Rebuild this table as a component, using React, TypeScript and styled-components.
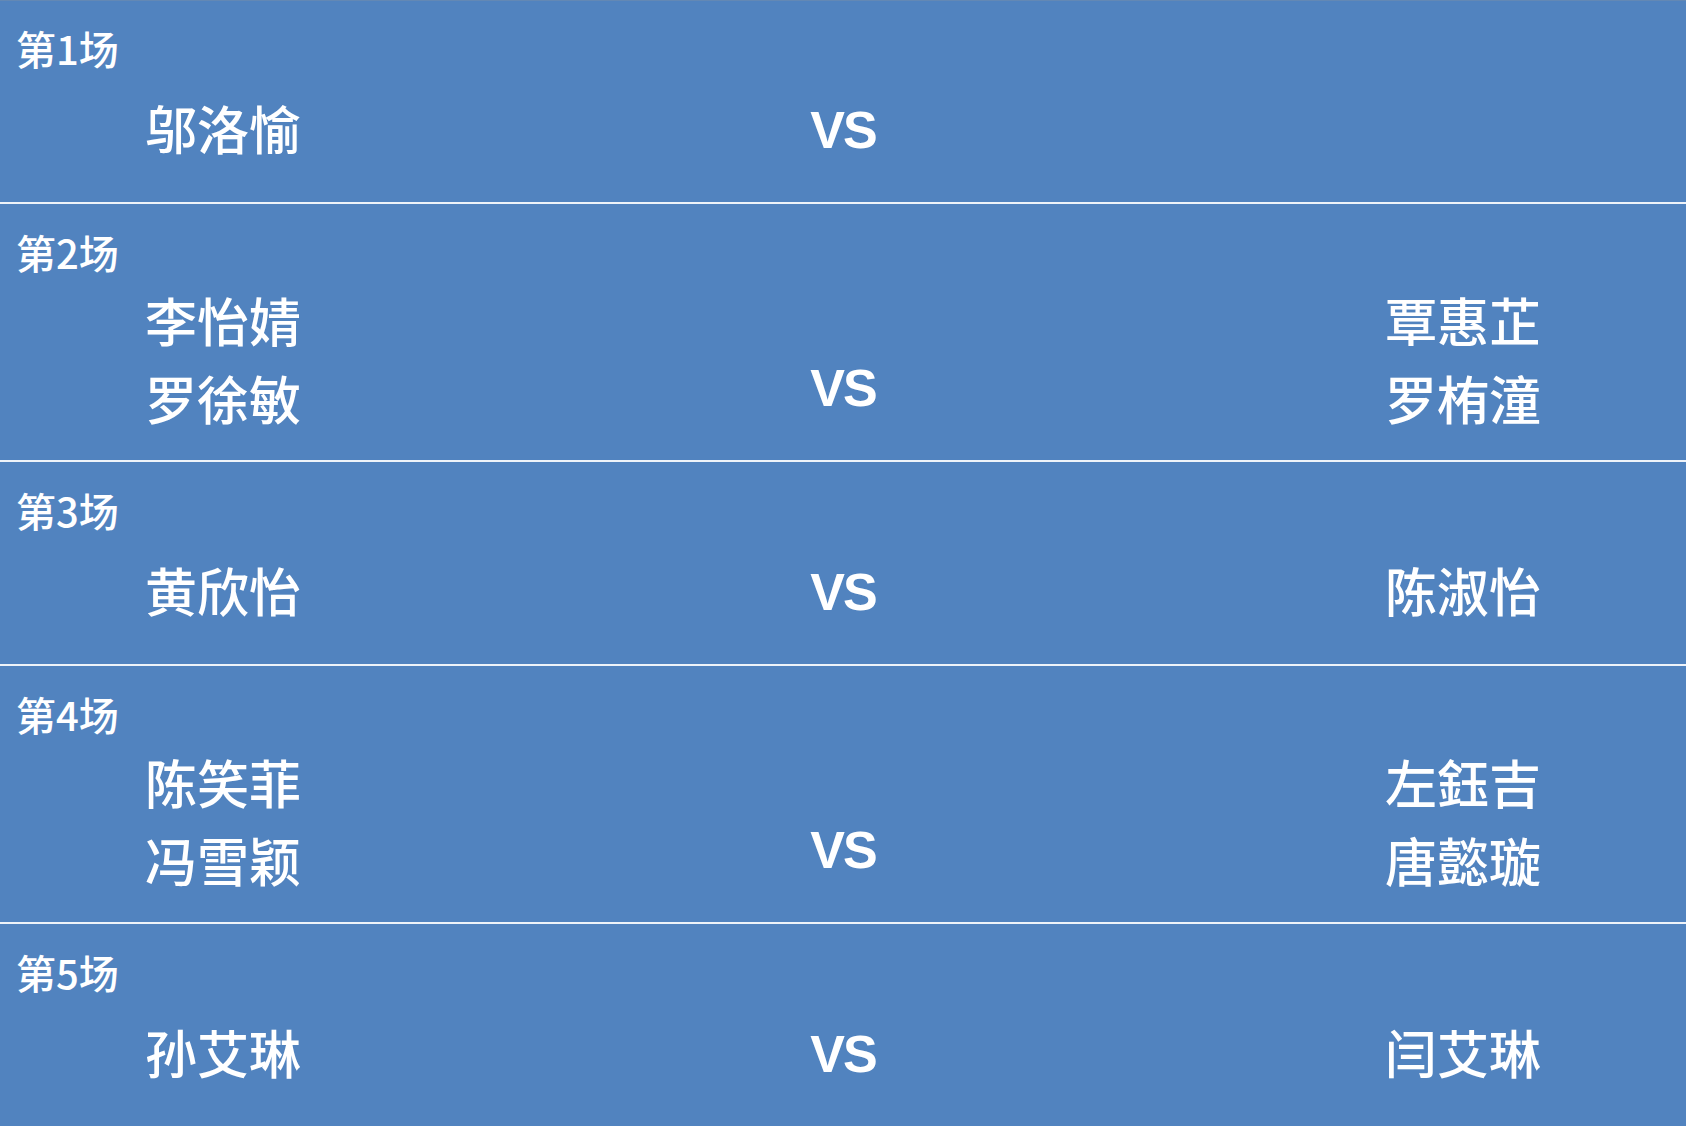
import React from "react";
import styled, { createGlobalStyle } from "styled-components";

const GlobalStyle = createGlobalStyle`
  html, body {
    margin: 0;
    padding: 0;
    background: #5183bf;
  }
  body {
    font-family: "Noto Sans CJK SC", "Noto Sans", sans-serif;
    color: #ffffff;
  }
`;

const List = styled.div`
  display: flex;
  flex-direction: column;
  box-shadow: inset 0 1px 0 #6388b4;
`;

const MatchRow = styled.section`
  display: flex;
  flex-direction: column;
  padding: 25px 0 24px 0;
  border-bottom: 2px solid #eef3f9;
`;

const Title = styled.div`
  padding-left: 16px;
  font-size: 40px;
  font-weight: 500;
  line-height: 46px;
  margin-bottom: 6px;
`;

const Matchup = styled.div`
  display: grid;
  grid-template-columns: 1fr auto 1fr;
  align-items: center;
  padding: 0 145px;
`;

const Team = styled.div<{ $side: "left" | "right" }>`
  display: flex;
  flex-direction: column;
  justify-self: ${(p) => (p.$side === "left" ? "start" : "end")};
`;

const Player = styled.div`
  font-size: 52px;
  font-weight: 500;
  line-height: 77.5px;
  white-space: nowrap;
`;

const Versus = styled.div`
  align-self: end;
  font-family: "Liberation Sans", Arial, sans-serif;
  font-weight: bold;
  font-size: 52px;
  letter-spacing: -2px;
  line-height: 95px;
  padding-top: 6px;
`;

type Match = { left: string[]; right: string[] };

const matches: Match[] = [
  { left: ["邬洛愉"], right: [] },
  { left: ["李怡婧", "罗徐敏"], right: ["覃惠芷", "罗栯潼"] },
  { left: ["黄欣怡"], right: ["陈淑怡"] },
  { left: ["陈笑菲", "冯雪颖"], right: ["左鈺吉", "唐懿璇"] },
  { left: ["孙艾琳"], right: ["闫艾琳"] },
];

export default function App() {
  return (
    <>
      <GlobalStyle />
      <List>
        {matches.map((m, i) => (
          <MatchRow key={i}>
            <Title>第{i + 1}场</Title>
            <Matchup>
              <Team $side="left">
                {m.left.map((n) => (
                  <Player key={n}>{n}</Player>
                ))}
              </Team>
              <Versus>VS</Versus>
              <Team $side="right">
                {m.right.map((n) => (
                  <Player key={n}>{n}</Player>
                ))}
              </Team>
            </Matchup>
          </MatchRow>
        ))}
      </List>
    </>
  );
}
